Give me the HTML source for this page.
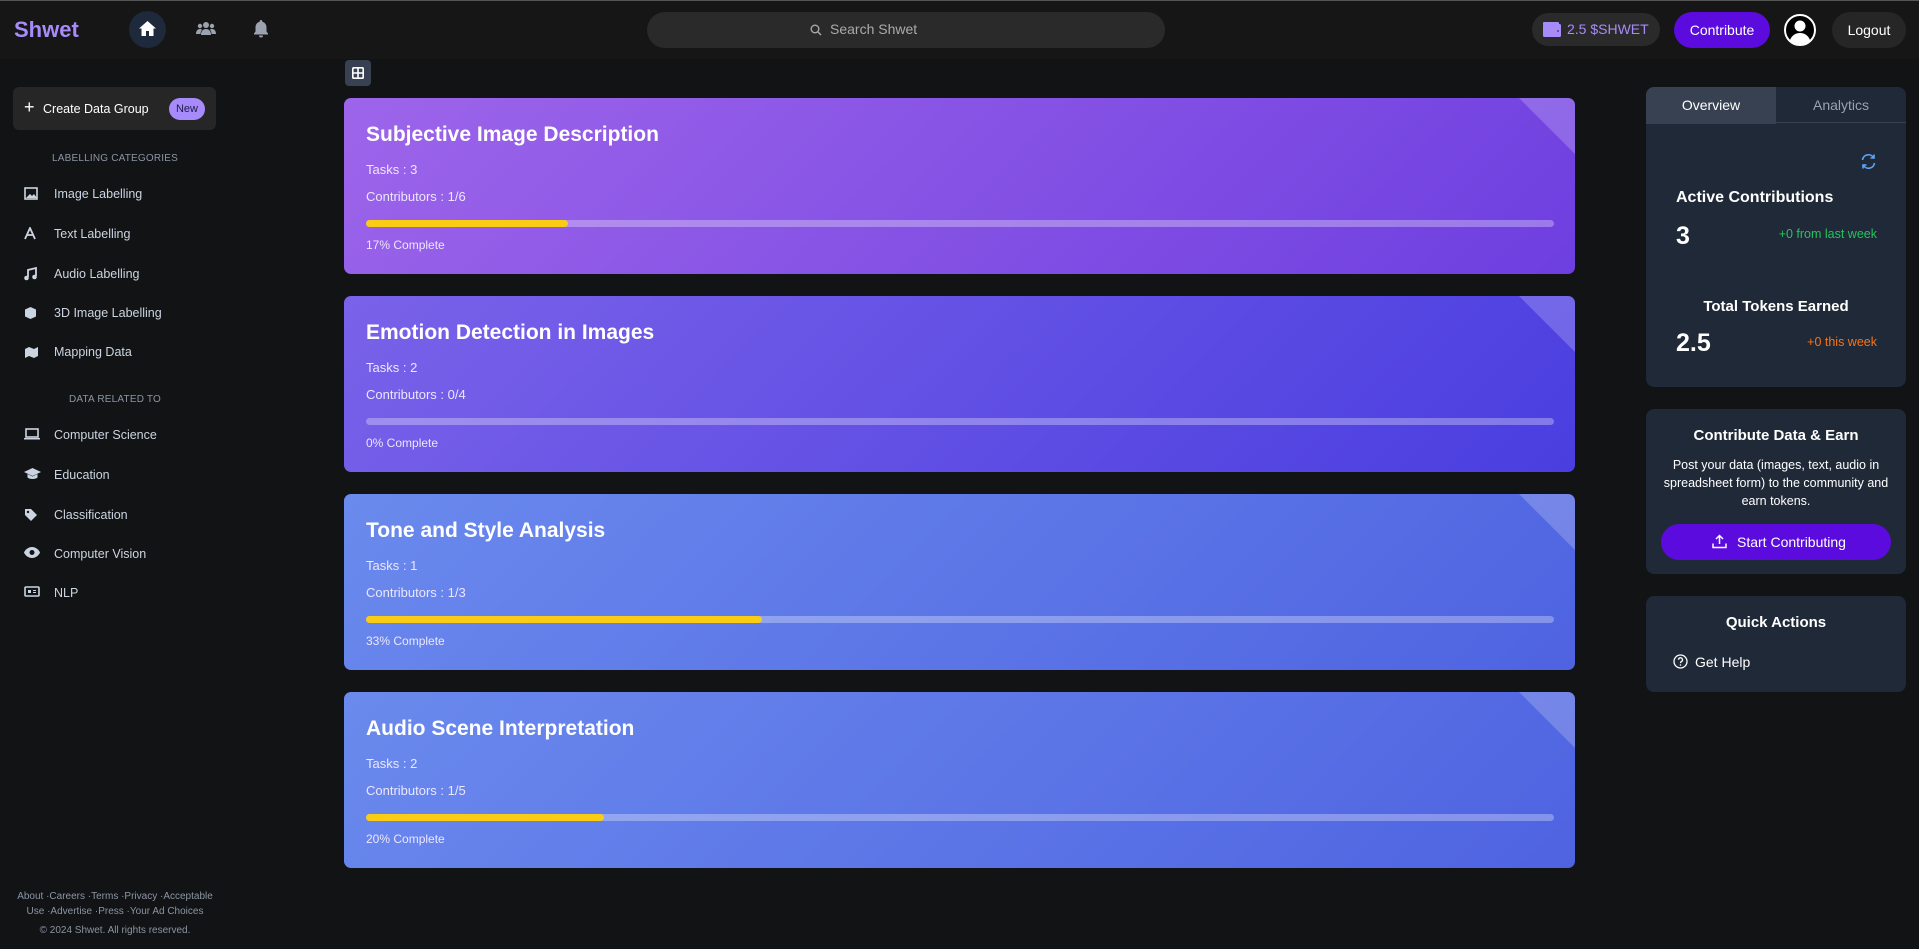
<!DOCTYPE html>
<html><head><meta charset="utf-8"><style>
*{box-sizing:border-box;margin:0;padding:0}
body{width:1919px;height:949px;background:#121314;font-family:"Liberation Sans",sans-serif;color:#fff;position:relative;overflow:hidden}
.a{position:absolute}
.hdr{left:0;top:0;width:1919px;height:59px;background:#161616;border-top:1px solid #555}
.side{color:#cbd5e1;font-size:12.5px}
.side .it{position:absolute;left:54px}
.side svg{position:absolute;left:-30px;top:0}
.cat{position:absolute;width:230px;text-align:center;font-size:10px;color:#8b95a5;letter-spacing:.2px}
.card{position:absolute;left:344px;width:1231px;height:176px;border-radius:7px;overflow:hidden}
.card .tri{position:absolute;right:0;top:0;width:0;height:0;border-top:56px solid rgba(255,255,255,.2);border-left:56px solid transparent}
.card h2{position:absolute;left:22px;top:25px;font-size:21px;font-weight:bold}
.card .t{position:absolute;left:22px;font-size:13px;color:#ece6ff}
.card .bar{position:absolute;left:22px;right:21px;top:122px;height:7px;border-radius:4px;background:rgba(255,255,255,.3)}
.card .bar i{display:block;height:7px;border-radius:4px;background:#facc15}
.panel{position:absolute;left:1646px;width:260px;background:#1f2937;border-radius:8px}
</style></head><body>
<div class="a hdr"></div>
<div class="a" style="left:14px;top:17px;font-size:22px;font-weight:bold;color:#a78bfa">Shwet</div>
<div class="a" style="left:129px;top:11px;width:37px;height:37px;border-radius:50%;background:#1e293b"></div>
<svg class="a" style="left:138px;top:20px" width="19" height="17" viewBox="0 0 19 17"><path d="M9.5 1L1 8.5h2.5V16h4.5v-5h3v5h4.5V8.5H18z" fill="#fff"/></svg>
<svg class="a" style="left:196px;top:21px" width="20" height="16" viewBox="0 0 20 16"><circle cx="10" cy="4" r="3" fill="#9ca3af"/><circle cx="4" cy="5" r="2.2" fill="#9ca3af"/><circle cx="16" cy="5" r="2.2" fill="#9ca3af"/><path d="M5 14c0-4 2-6 5-6s5 2 5 6z M0 13c0-3 1.5-5 4-5 1 0 1.5.3 2 .6C5 10 4.5 11.5 4.5 13z M20 13c0-3-1.5-5-4-5-1 0-1.5.3-2 .6 1 1.4 1.5 2.9 1.5 4.4z" fill="#9ca3af"/></svg>
<svg class="a" style="left:253px;top:19px" width="16" height="19" viewBox="0 0 16 19"><path d="M8 1c-.8 0-1.3.6-1.3 1.3v.5C4 3.5 2.5 5.8 2.5 8.5v4L1 14.5v1h14v-1l-1.5-2v-4c0-2.7-1.5-5-4.2-5.7v-.5C9.3 1.6 8.8 1 8 1zM6 16.5a2 2 0 004 0z" fill="#9ca3af"/></svg>
<div class="a" style="left:647px;top:12px;width:518px;height:36px;border-radius:18px;background:#2a2a2a"></div>
<svg class="a" style="left:810px;top:24px" width="12" height="12" viewBox="0 0 12 12"><circle cx="5" cy="5" r="3.8" fill="none" stroke="#aaa" stroke-width="1.4"/><path d="M8 8l3 3" stroke="#aaa" stroke-width="1.4"/></svg>
<div class="a" style="left:830px;top:21px;font-size:14px;color:#aaa">Search Shwet</div>
<div class="a" style="left:1532px;top:13px;width:128px;height:33px;border-radius:17px;background:#2a2a2a"></div>
<svg class="a" style="left:1543px;top:22px" width="18" height="15" viewBox="0 0 18 15"><rect x="0" y="0" width="16" height="3" rx="1" fill="#a78bfa"/><rect x="0" y="2" width="18" height="13" rx="1.5" fill="#a78bfa"/><circle cx="15" cy="9" r=".9" fill="#333"/></svg>
<div class="a" style="left:1567px;top:21px;font-size:14px;color:#a78bfa">2.5 $SHWET</div>
<div class="a" style="left:1674px;top:12px;width:96px;height:36px;border-radius:18px;background:#5b0bdd;font-size:14px;text-align:center;line-height:36px">Contribute</div>
<svg class="a" style="left:1784px;top:14px" width="32" height="32" viewBox="0 0 32 32"><circle cx="16" cy="16" r="15" fill="#000" stroke="#fff" stroke-width="2"/><circle cx="16" cy="12" r="5.5" fill="#fff"/><path d="M6 26c2-5 6-7 10-7s8 2 10 7a14 14 0 01-20 0z" fill="#fff"/></svg>
<div class="a" style="left:1832px;top:12px;width:74px;height:36px;border-radius:18px;background:#262626;font-size:14px;text-align:center;line-height:36px">Logout</div>

<div class="a" style="left:13px;top:87px;width:203px;height:43px;border-radius:6px;background:#262626"></div>
<div class="a" style="left:24px;top:98px;font-size:18px;line-height:18px">+</div>
<div class="a" style="left:43px;top:102px;font-size:12.5px">Create Data Group</div>
<div class="a" style="left:169px;top:98px;width:36px;height:22px;border-radius:11px;background:#a78bfa;color:#1e1b4b;font-size:11px;text-align:center;line-height:22px">New</div>
<div class="side">
<div class="cat" style="left:0;top:153px">LABELLING CATEGORIES</div>
<div class="it" style="top:187px"><svg width="14" height="13" viewBox="0 0 14 13"><rect x="1" y="1" width="12" height="11" fill="none" stroke="#cbd5e1" stroke-width="1.6"/><path d="M2 11l4-4 2 2 2-2 3 4z" fill="#cbd5e1"/></svg>Image Labelling</div>
<div class="it" style="top:227px"><svg width="12" height="13" viewBox="0 0 12 13"><path d="M1 12L6 1l5 11M3 8h6" fill="none" stroke="#cbd5e1" stroke-width="1.8"/></svg>Text Labelling</div>
<div class="it" style="top:267px"><svg width="13" height="14" viewBox="0 0 13 14"><path d="M4 10V3l8-2v8" fill="none" stroke="#cbd5e1" stroke-width="1.8"/><circle cx="2.5" cy="11" r="2.3" fill="#cbd5e1"/><circle cx="10.5" cy="10" r="2.3" fill="#cbd5e1"/></svg>Audio Labelling</div>
<div class="it" style="top:306px"><svg width="13" height="14" viewBox="0 0 13 14"><path d="M6.5 1L12 3.5v7L6.5 13 1 10.5v-7z" fill="#cbd5e1"/></svg>3D Image Labelling</div>
<div class="it" style="top:345px"><svg width="15" height="14" viewBox="0 0 15 14"><path d="M1 4l4-2 5 2 4-2v9l-4 2-5-2-4 2z" fill="#cbd5e1"/></svg>Mapping Data</div>
<div class="cat" style="left:0;top:394px">DATA RELATED TO</div>
<div class="it" style="top:428px"><svg width="16" height="12" viewBox="0 0 16 12"><rect x="2" y="1" width="12" height="8" fill="none" stroke="#cbd5e1" stroke-width="1.6"/><path d="M0 10h16v1.5H0z" fill="#cbd5e1"/></svg>Computer Science</div>
<div class="it" style="top:468px"><svg width="17" height="12" viewBox="0 0 17 12"><path d="M8.5 0L17 4l-8.5 4L0 4z M3.5 6v3.5c2 2 8 2 10 0V6l-5 2.5z" fill="#cbd5e1"/></svg>Education</div>
<div class="it" style="top:508px"><svg width="14" height="14" viewBox="0 0 14 14"><path d="M1 1h6l6 6-6 6-6-6z" fill="#cbd5e1"/><circle cx="4" cy="4" r="1.2" fill="#121314"/></svg>Classification</div>
<div class="it" style="top:547px"><svg width="16" height="11" viewBox="0 0 16 11"><path d="M8 0C4 0 1 3 0 5.5 1 8 4 11 8 11s7-3 8-5.5C15 3 12 0 8 0z" fill="#cbd5e1"/><circle cx="8" cy="5.5" r="2.5" fill="#121314"/></svg>Computer Vision</div>
<div class="it" style="top:586px"><svg width="16" height="11" viewBox="0 0 16 11"><rect x="1" y="1" width="14" height="9" rx="1" fill="none" stroke="#cbd5e1" stroke-width="1.6"/><path d="M4 4h3v3H4zM9 4h3v1H9zM9 6h3v1H9z" fill="#cbd5e1"/></svg>NLP</div>
</div>
<div class="a" style="left:0;top:889px;width:230px;text-align:center;font-size:10px;color:#8b95a5;line-height:15px">About ·Careers ·Terms ·Privacy ·Acceptable<br>Use ·Advertise ·Press ·Your Ad Choices</div>
<div class="a" style="left:0;top:925px;width:230px;text-align:center;font-size:10px;color:#8b95a5">© 2024 Shwet. All rights reserved.</div>

<div class="a" style="left:345px;top:60px;width:26px;height:26px;border-radius:4px;background:#374151"></div>
<svg class="a" style="left:352px;top:67px" width="12" height="12" viewBox="0 0 12 12"><rect x=".8" y=".8" width="10.4" height="10.4" rx="1" fill="none" stroke="#fff" stroke-width="1.6"/><path d="M6 1v10M1 6h10" stroke="#fff" stroke-width="1.6"/></svg>

<div class="card" style="top:98px;background:linear-gradient(135deg,#9d65ea,#6e3fe0)"><div class="tri"></div><h2>Subjective Image Description</h2><div class="t" style="top:64px">Tasks : 3</div><div class="t" style="top:91px">Contributors : 1/6</div><div class="bar"><i style="width:17%"></i></div><div class="t" style="top:140px;font-size:12px">17% Complete</div></div>
<div class="card" style="top:296px;background:linear-gradient(135deg,#7a62e9,#4a3ee0)"><div class="tri"></div><h2>Emotion Detection in Images</h2><div class="t" style="top:64px">Tasks : 2</div><div class="t" style="top:91px">Contributors : 0/4</div><div class="bar"><i style="width:0"></i></div><div class="t" style="top:140px;font-size:12px">0% Complete</div></div>
<div class="card" style="top:494px;background:linear-gradient(135deg,#6a8aed,#4f63e1)"><div class="tri"></div><h2>Tone and Style Analysis</h2><div class="t" style="top:64px">Tasks : 1</div><div class="t" style="top:91px">Contributors : 1/3</div><div class="bar"><i style="width:33.3%"></i></div><div class="t" style="top:140px;font-size:12px">33% Complete</div></div>
<div class="card" style="top:692px;background:linear-gradient(135deg,#6a8aed,#4f63e1)"><div class="tri"></div><h2>Audio Scene Interpretation</h2><div class="t" style="top:64px">Tasks : 2</div><div class="t" style="top:91px">Contributors : 1/5</div><div class="bar"><i style="width:20%"></i></div><div class="t" style="top:140px;font-size:12px">20% Complete</div></div>

<div class="panel" style="top:87px;height:300px;overflow:hidden">
<div class="a" style="left:0;top:0;width:130px;height:37px;background:#374151;font-size:14px;text-align:center;line-height:37px">Overview</div>
<div class="a" style="left:130px;top:0;width:130px;height:36px;font-size:14px;text-align:center;line-height:36px;color:#9ca3af;border-bottom:1px solid #374151">Analytics</div>
<svg class="a" style="left:214px;top:66px" width="17" height="17" viewBox="0 0 17 17"><path d="M2.5 7A6 6 0 0113.5 4.5M14.5 10A6 6 0 013.5 12.5" fill="none" stroke="#60a5fa" stroke-width="1.6"/><path d="M14 1.5v3.5h-3.5M3 15.5V12h3.5" fill="none" stroke="#60a5fa" stroke-width="1.6"/></svg>
<div class="a" style="left:30px;top:102px;font-size:16px;font-weight:bold">Active Contributions</div>
<div class="a" style="left:30px;top:135px;font-size:25px;font-weight:bold">3</div>
<div class="a" style="right:29px;top:140px;font-size:12.5px;color:#22c55e">+0 from last week</div>
<div class="a" style="left:0;width:260px;text-align:center;top:211px;font-size:15px;font-weight:bold">Total Tokens Earned</div>
<div class="a" style="left:30px;top:242px;font-size:25px;font-weight:bold">2.5</div>
<div class="a" style="right:29px;top:248px;font-size:12.5px;color:#f97316">+0 this week</div>
</div>
<div class="panel" style="top:409px;height:165px">
<div class="a" style="left:0;width:260px;text-align:center;top:18px;font-size:15px;font-weight:bold">Contribute Data &amp; Earn</div>
<div class="a" style="left:10px;width:240px;text-align:center;top:47px;font-size:12.5px;line-height:18px">Post your data (images, text, audio in spreadsheet form) to the community and earn tokens.</div>
<div class="a" style="left:15px;top:115px;width:230px;height:36px;border-radius:18px;background:#5b0bdd"></div>
<svg class="a" style="left:66px;top:125px" width="15" height="15" viewBox="0 0 15 15"><path d="M7.5 10V1.5M4 5l3.5-3.5L11 5M1 9.5v4h13v-4" fill="none" stroke="#fff" stroke-width="1.5"/></svg>
<div class="a" style="left:91px;top:125px;font-size:14px">Start Contributing</div>
</div>
<div class="panel" style="top:596px;height:96px">
<div class="a" style="left:0;width:260px;text-align:center;top:18px;font-size:15px;font-weight:bold">Quick Actions</div>
<svg class="a" style="left:27px;top:58px" width="15" height="15" viewBox="0 0 15 15"><circle cx="7.5" cy="7.5" r="6.5" fill="none" stroke="#fff" stroke-width="1.3"/><path d="M5.5 5.8a2 2 0 113 1.7c-.7.4-1 .8-1 1.6" fill="none" stroke="#fff" stroke-width="1.3"/><circle cx="7.5" cy="11" r=".8" fill="#fff"/></svg>
<div class="a" style="left:49px;top:58px;font-size:14px">Get Help</div>
</div>
</body></html>
